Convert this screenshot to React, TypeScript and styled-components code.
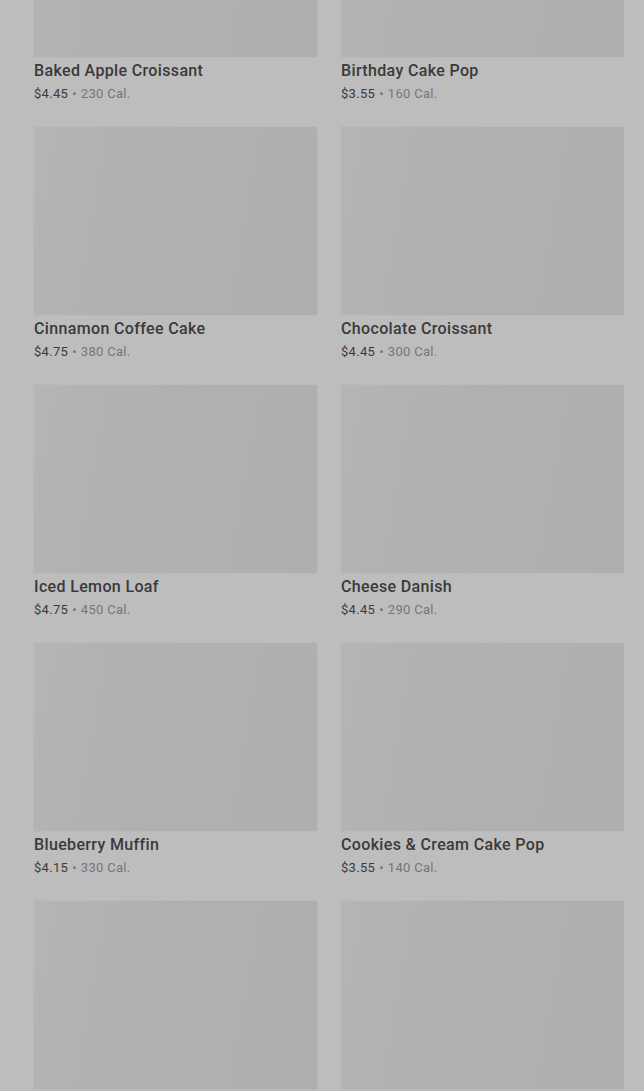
import styled, { createGlobalStyle } from "styled-components";

const GlobalStyle = createGlobalStyle`
html, body {
  margin:0;
  padding:0;
  height:100%;
  overflow:hidden;
  background:#bdbdbd;
}
body {
  font-family:Roboto, "Liberation Sans", sans-serif;
  -webkit-font-smoothing:antialiased;
}
`;

const Page = styled.div`
height:100vh;
overflow:hidden;
background:#bdbdbd;
`;

const Grid = styled.ul`
list-style:none;
margin:-131px 0 0;
padding:0 20px 0 34px;
display:grid;
grid-template-columns:repeat(2, 283px);
column-gap:24px;
`;

const Card = styled.li`
display:flex;
flex-direction:column;
padding-bottom:24px;
`;

const Thumb = styled.div`
height:188px;
background:linear-gradient(100deg, #b5b5b5 0%, #b1b1b1 30%, #afafaf 100%);
box-shadow:0 0 0 1px rgba(0,0,0,0.015);
`;

const Name = styled.h3`
margin:4px 0 0;
font-size:16px;
line-height:20px;
font-weight:500;
letter-spacing:0.35px;
color:#3a3a3a;
`;

const Meta = styled.p`
margin:4px 0 0;
font-size:13px;
line-height:18px;
letter-spacing:0.3px;
color:#3b3b3b;
`;

const Cal = styled.span`
color:#767676;
`;

const Dot = styled.span`
color:#767676;
margin:0 4px;
`;

type Item = { name?: string; price?: string; cal?: number };

// the last row is only partly scrolled into view, so its captions are left out
const items: Item[] = [
  { name: "Baked Apple Croissant", price: "$4.45", cal: 230 },
  { name: "Birthday Cake Pop", price: "$3.55", cal: 160 },
  { name: "Cinnamon Coffee Cake", price: "$4.75", cal: 380 },
  { name: "Chocolate Croissant", price: "$4.45", cal: 300 },
  { name: "Iced Lemon Loaf", price: "$4.75", cal: 450 },
  { name: "Cheese Danish", price: "$4.45", cal: 290 },
  { name: "Blueberry Muffin", price: "$4.15", cal: 330 },
  { name: "Cookies & Cream Cake Pop", price: "$3.55", cal: 140 },
  {},
  {},
];

export default function App() {
  return (
    <>
      <GlobalStyle />
      <Page>
        <Grid>
          {items.map((item, i) => (
            <Card key={i}>
              <Thumb />
              {item.name && (
                <>
                  <Name>{item.name}</Name>
                  <Meta>
                    {item.price}
                    <Dot>•</Dot>
                    <Cal>{item.cal} Cal.</Cal>
                  </Meta>
                </>
              )}
            </Card>
          ))}
        </Grid>
      </Page>
    </>
  );
}
